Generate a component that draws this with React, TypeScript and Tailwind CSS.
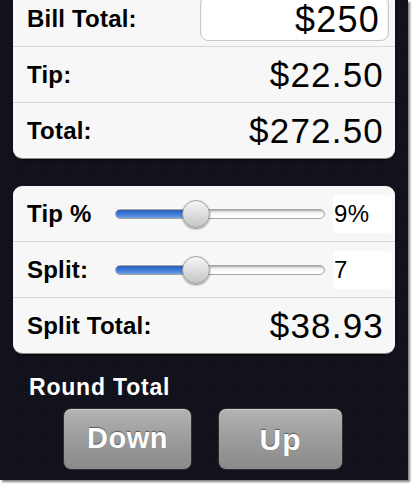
import React from "react";

const font = "font-['Liberation_Sans',Arial,Helvetica,sans-serif]";

function Slider({ fill }: { fill: number }) {
  return (
    <div className="relative w-[210px] h-[28px] flex items-center">
      <div className="w-full h-[10px] rounded-full border border-[#a8a8a8] bg-gradient-to-b from-[#d8d8d8] via-[#fbfbfb] to-[#ffffff] overflow-hidden shadow-[inset_0_1px_1px_rgba(0,0,0,0.2)]">
        <div
          className="h-full bg-gradient-to-b from-[#2a5db8] via-[#3f7ad8] to-[#6c9ce6]"
          style={{ width: fill }}
        />
      </div>
      <div
        className="absolute top-0 w-[28px] h-[28px] rounded-full border border-[#a0a0a0] bg-gradient-to-b from-[#f6f6f6] via-[#dedede] to-[#c4c4c4] shadow-[0_1px_2px_rgba(0,0,0,0.45)]"
        style={{ left: fill - 14 }}
      />
    </div>
  );
}

const label = "text-[24px] font-bold tracking-[0.2px] text-black";
const value = "text-[35px] leading-none tracking-[1.2px] text-black";

export default function App() {
  return (
    <div className={`w-[412px] h-[484px] bg-white ${font}`}>
      <div className="w-[408px] h-[480px] overflow-hidden bg-[#0f1019] bg-[image:repeating-linear-gradient(90deg,rgba(255,255,255,0.012)_0px,rgba(255,255,255,0.012)_1px,transparent_1px,transparent_3px),repeating-linear-gradient(0deg,rgba(255,255,255,0.01)_0px,rgba(255,255,255,0.01)_1px,transparent_1px,transparent_3px)] shadow-[2px_2px_2px_rgba(0,0,0,0.5)] flex flex-col px-[13px]">
        {/* Card 1 */}
        <div className="mt-[-10px] w-[382px] rounded-[9px] bg-[#f7f7f7] shadow-[0_1px_0_#8a8a8a,0_2px_2px_rgba(0,0,0,0.6)] flex flex-col">
          <div className="h-[56px] flex items-center justify-between pl-[14px] pr-[6px]">
            <span className={`${label} pt-[2px]`}>Bill Total:</span>
            <div className="w-[189px] h-[46px] rounded-[8px] bg-white border border-[#c8c8c8] shadow-[inset_0_1px_2px_rgba(0,0,0,0.15)] flex items-center justify-end pr-[8px]">
              <span className="text-[36px] leading-none tracking-[1.2px] text-black pt-[4px]">$250</span>
            </div>
          </div>
          <div className="h-[56px] border-t border-[#d7d7d7] flex items-center justify-between pl-[14px] pr-[11px]">
            <span className={label}>Tip:</span>
            <span className={value}>$22.50</span>
          </div>
          <div className="h-[56px] border-t border-[#d7d7d7] flex items-center justify-between pl-[14px] pr-[11px]">
            <span className={label}>Total:</span>
            <span className={value}>$272.50</span>
          </div>
        </div>

        {/* Card 2 */}
        <div className="mt-[28px] w-[382px] rounded-[9px] bg-[#f7f7f7] shadow-[0_1px_0_#8a8a8a,0_2px_2px_rgba(0,0,0,0.6)] flex flex-col">
          <div className="h-[55px] flex items-center pl-[14px]">
            <span className={`w-[88px] ${label}`}>Tip %</span>
            <Slider fill={81} />
            <div className="ml-[8px] w-[59px] h-[38px] rounded-[4px] bg-white flex items-center pl-[1px]">
              <span className="text-[24px] tracking-[0.5px] text-black">9%</span>
            </div>
          </div>
          <div className="h-[56px] border-t border-[#d7d7d7] flex items-center pl-[14px]">
            <span className={`w-[88px] ${label}`}>Split:</span>
            <Slider fill={81} />
            <div className="ml-[8px] w-[59px] h-[38px] rounded-[4px] bg-white flex items-center pl-[1px]">
              <span className="text-[24px] tracking-[0.5px] text-black">7</span>
            </div>
          </div>
          <div className="h-[56px] border-t border-[#d7d7d7] flex items-center justify-between pl-[14px] pr-[11px]">
            <span className={label}>Split Total:</span>
            <span className={value}>$38.93</span>
          </div>
        </div>

        {/* Round total */}
        <div className="mt-[21px] pl-[16px] text-[23px] leading-[26px] font-bold tracking-[0.8px] text-white">
          Round Total
        </div>
        <div className="mt-[8px] flex pl-[50px] gap-[26px]">
          <button className="w-[129px] h-[62px] rounded-[8px] border border-[#2e2e2e] bg-gradient-to-b from-[#b3b3b3] via-[#9c9c9c] to-[#8a8a8a] shadow-[inset_0_1px_0_rgba(255,255,255,0.35)] flex items-center justify-center">
            <span className="text-[29px] font-bold tracking-[0.5px] text-white [text-shadow:0_-1px_1px_rgba(0,0,0,0.45)]">Down</span>
          </button>
          <button className="w-[125px] h-[62px] rounded-[8px] border border-[#2e2e2e] bg-gradient-to-b from-[#b3b3b3] via-[#9c9c9c] to-[#8a8a8a] shadow-[inset_0_1px_0_rgba(255,255,255,0.35)] flex items-center justify-center">
            <span className="text-[30px] font-bold tracking-[1px] text-white [text-shadow:0_-1px_1px_rgba(0,0,0,0.45)]">Up</span>
          </button>
        </div>
      </div>
    </div>
  );
}
